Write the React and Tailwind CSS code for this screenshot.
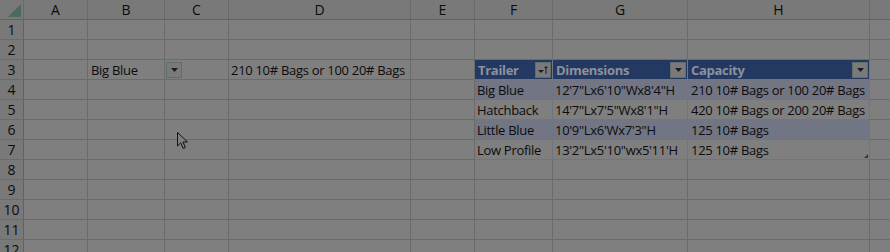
import React from "react";

const cols = [
  { k: "A", w: "w-[64px]" },
  { k: "B", w: "w-[77px]" },
  { k: "C", w: "w-[64px]" },
  { k: "D", w: "w-[182px]" },
  { k: "E", w: "w-[64px]" },
  { k: "F", w: "w-[78px]" },
  { k: "G", w: "w-[135px]" },
  { k: "H", w: "w-[182px]" },
];

function Arrow() {
  return (
    <svg width="7" height="4" viewBox="0 0 7 4" className="block">
      <polygon points="0,0 7,0 3.5,4" fill="#1a1a2a" />
    </svg>
  );
}

function DropBtn({ sort }) {
  return (
    <div className="w-[16px] h-[16px] border border-[#5f6e6a] bg-[#7a7a7a] flex items-center justify-center shrink-0">
      {sort ? (
        <svg width="12" height="10" viewBox="0 0 12 10" className="block">
          <polygon points="1,5 7,5 4,8" fill="#1a1a2a" />
          <line x1="9" y1="2" x2="9" y2="9" stroke="#1a1a2a" strokeWidth="1" />
          <polygon points="7,3 11,3 9,1" fill="#1a1a2a" />
        </svg>
      ) : (
        <Arrow />
      )}
    </div>
  );
}

const tableRows = [
  ["Big Blue", "12'7\"Lx6'10\"Wx8'4\"H", "210 10# Bags or 100 20# Bags"],
  ["Hatchback", "14'7\"Lx7'5\"Wx8'1\"H", "420 10# Bags or 200 20# Bags"],
  ["Little Blue", "10'9\"Lx6'Wx7'3\"H", "125 10# Bags"],
  ["Low Profile", "13'2\"Lx5'10\"wx5'11'H", "125 10# Bags"],
];

function cellContent(r, c) {
  if (r === 3 && c === "B") return <span className="pl-[3px] pt-[2px]">Big Blue</span>;
  if (r === 3 && c === "C")
    return (
      <div className="pl-[1px] h-full flex items-center">
        <DropBtn />
      </div>
    );
  if (r === 3 && c === "D")
    return <span className="pl-[2px] pt-[2px]">210 10# Bags or 100 20# Bags</span>;
  return null;
}

export default function App() {
  const rows = Array.from({ length: 12 }, (_, i) => i + 1);
  return (
    <div
      className="w-[890px] h-[252px] overflow-hidden bg-[#7f7f7f] text-[#0c0c0c] relative"
      style={{ fontFamily: '"Open Sans", "Noto Sans", sans-serif' }}
    >
      {/* column header */}
      <div className="flex h-[20px] bg-[#797979] text-[14px] leading-none">
        <div className="w-[24px] h-[20px] border-r border-[#6a6a6a] border-b border-b-[#66663f] flex items-end justify-end pr-[2px] pb-[2px] shrink-0">
          <svg width="13" height="13" viewBox="0 0 13 13" className="block">
            <polygon points="13,0 13,13 0,13" fill="#4c6a5c" />
          </svg>
        </div>
        {cols.map((c) => (
          <div
            key={c.k}
            className={`${c.w} shrink-0 h-[20px] border-r border-[#6b6b6b] border-b border-b-[#66663f] flex items-center justify-center`}
          >
            {c.k}
          </div>
        ))}
        <div className="flex-1 border-b border-b-[#66663f]" />
      </div>
      {rows.map((r) => {
        const inTable = r >= 3 && r <= 7;
        const tIdx = r - 4;
        const banded = r === 4 || r === 6;
        return (
          <div key={r} className="flex h-[20px] text-[13px] tracking-[-0.3px] leading-none">
            <div className="w-[24px] shrink-0 h-[20px] bg-[#797979] text-[14px] tracking-normal border-r border-r-[#66663f] border-b border-[#6b6b6b] flex items-center justify-center pt-[1px]">
              {r}
            </div>
            {cols.map((c) => {
              const isT = inTable && ["F", "G", "H"].includes(c.k);
              let bg = "";
              let content = cellContent(r, c.k);
              if (isT) {
                if (r === 3) {
                  bg = "bg-[#233962] text-[#8d919b] font-bold";
                  const label = { F: "Trailer", G: "Dimensions", H: "Capacity" }[c.k];
                  content = (
                    <div className="flex items-center justify-between w-full h-full pl-[3px] pr-[1px]">
                      <span className="pt-[2px]">{label}</span>
                      <DropBtn sort={c.k === "F"} />
                    </div>
                  );
                } else {
                  bg = banded ? "bg-[#727684]" : "";
                  content = (
                    <span className={`pt-[2px] ${c.k === "H" ? "pl-[3px]" : "pl-[2px]"}`}>
                      {tableRows[tIdx][{ F: 0, G: 1, H: 2 }[c.k]]}
                    </span>
                  );
                }
              }
              return (
                <div
                  key={c.k}
                  className={`${c.w} shrink-0 h-[20px] border-r border-b ${
                    isT ? "border-[#6e7680]" : "border-[#6b6b6b]"
                  } ${bg} flex items-center whitespace-nowrap overflow-visible relative`}
                >
                  {content}
                  {isT && r === 7 && c.k === "H" && (
                    <svg width="4" height="4" viewBox="0 0 4 4" className="absolute right-[1px] bottom-[1px]">
                      <polygon points="4,0 4,4 0,4" fill="#223a62" />
                    </svg>
                  )}
                </div>
              );
            })}
            <div className="flex-1 border-b border-[#6b6b6b]" />
          </div>
        );
      })}
      {/* mouse cursor */}
      <svg
        width="14"
        height="20"
        viewBox="0 0 14 20"
        className="absolute left-[177px] top-[132px]"
      >
        <path
          d="M0.5,0.5 L0.5,14 L3.8,10.8 L6.2,16.5 L8.4,15.6 L6,10 L10.5,10 Z"
          fill="#7f7f7f"
          stroke="#1a0f12"
          strokeWidth="1"
        />
      </svg>
    </div>
  );
}
